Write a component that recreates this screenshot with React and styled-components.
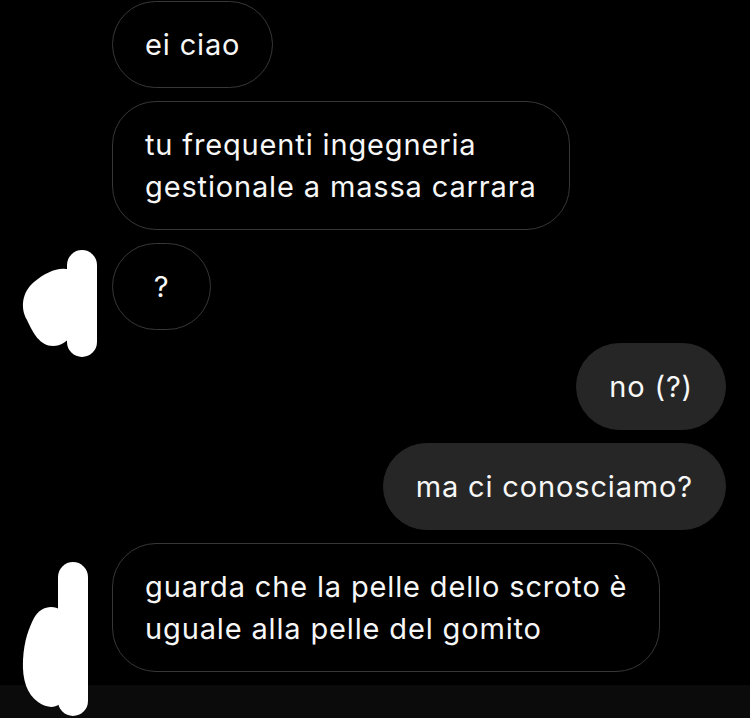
import React from "react";
import styled, { createGlobalStyle } from "styled-components";

const GlobalStyle = createGlobalStyle`
  html, body {
    margin: 0;
    padding: 0;
    background: #000;
  }
  body {
    font-family: Inter, "Noto Sans", "Liberation Sans", sans-serif;
    -webkit-font-smoothing: antialiased;
  }
`;

const Page = styled.div`
  position: relative;
  width: 750px;
  height: 718px;
  overflow: hidden;
  background: #000;
  display: flex;
  flex-direction: column;
`;

const Thread = styled.div`
  display: flex;
  flex-direction: column;
  gap: 13px;
  padding: 1px 24px 13px 112px;
`;

const Row = styled.div`
  display: flex;
  justify-content: ${(p) => (p.$side === "right" ? "flex-end" : "flex-start")};
`;

const Bubble = styled.div`
  box-sizing: border-box;
  display: flex;
  justify-content: center;
  min-width: 99px;
  border-radius: 44px;
  padding: 21.5px 32px;
  border: 1px solid ${(p) => (p.$side === "right" ? "#262626" : "#373737")};
  background: ${(p) => (p.$side === "right" ? "#262626" : "transparent")};
`;

const Text = styled.div`
  font-size: 29px;
  line-height: 42px;
  letter-spacing: 0.85px;
  color: #f7f7f7;
  white-space: nowrap;
  text-align: left;
`;

const Composer = styled.div`
  margin-top: auto;
  height: 34px;
  background: #0b0b0b;
`;

const Redaction = styled.svg`
  position: absolute;
  left: 0;
  top: 0;
  pointer-events: none;
`;

const messages = [
  { side: "left", lines: ["ei ciao"] },
  { side: "left", lines: ["tu frequenti ingegneria", "gestionale a massa carrara"] },
  { side: "left", lines: ["?"] },
  { side: "right", lines: ["no (?)"] },
  { side: "right", lines: ["ma ci conosciamo?"] },
  { side: "left", lines: ["guarda che la pelle dello scroto è", "uguale alla pelle del gomito"] },
];

export default function App() {
  return (
    <>
      <GlobalStyle />
      <Page>
        <Thread>
          {messages.map((m, i) => (
            <Row key={i} $side={m.side}>
              <Bubble $side={m.side}>
                <Text>
                  {m.lines.map((l, j) => (
                    <React.Fragment key={j}>
                      {j > 0 && <br />}
                      {l}
                    </React.Fragment>
                  ))}
                </Text>
              </Bubble>
            </Row>
          ))}
        </Thread>
        <Composer />
        <Redaction width="750" height="718" viewBox="0 0 750 718">
          <g fill="#fff">
            <rect x="67" y="250" width="30" height="107" rx="15" />
            <path d="M70,270 C60,266 46,272 34,282 C22,292 20,308 27,320 C33,333 40,346 53,346 C61,346 67,341 71,337 Z" />
            <rect x="58" y="562" width="30" height="154" rx="15" />
            <path d="M61,610 C52,604 40,607 34,618 C29,628 24,640 23,660 C22,680 27,694 38,702 C48,709 57,708 62,702 Z" />
          </g>
        </Redaction>
      </Page>
    </>
  );
}
